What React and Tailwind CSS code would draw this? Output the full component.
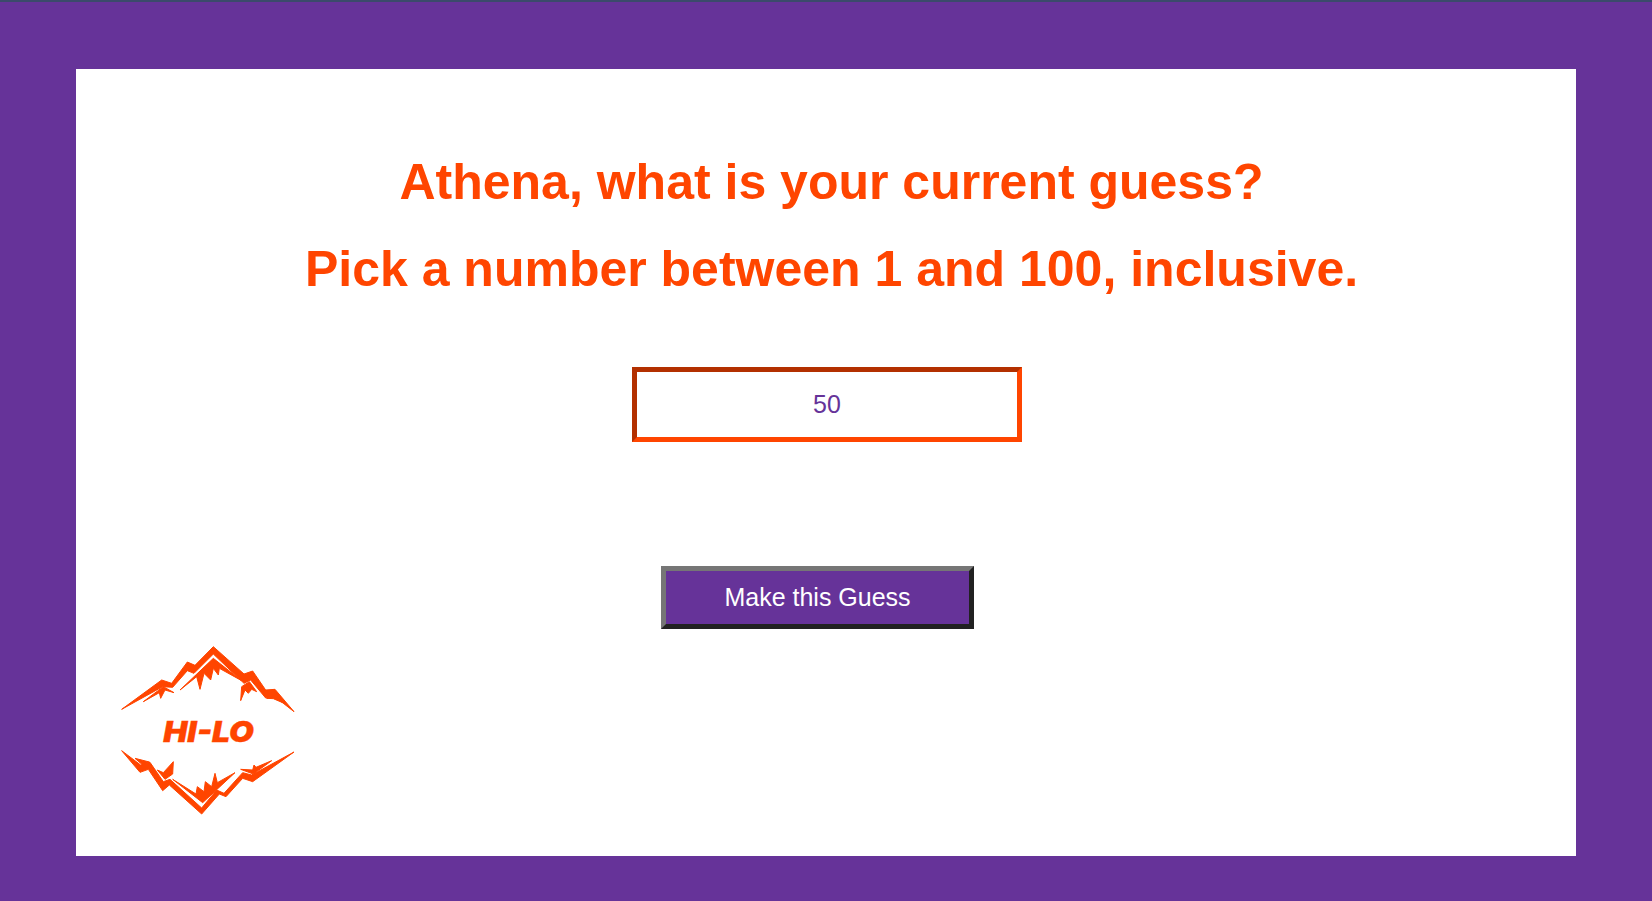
const orange = '#ff4500';

function Logo() {
  return (
    <svg width="210" height="190" viewBox="0 0 630 570" className="block">
      <g fill={orange} stroke={orange} strokeWidth="3">
        {/* top range */}
        <path d="M65 238L185 150L215 160L262 96L285 106L340 50L432 132L458 123L497 180L525 178L582 245L522 198L497 204L452 150L432 160L340 72L282 130L262 122L218 172L188 170Z" />
        <path d="M240 180L340 85L425 152L358 115L355 135L340 115L332 150L312 130L300 178L290 140Z" />
        <path d="M130 215L190 170L222 188L195 180L182 205L178 188Z" />
        <path d="M422 212L425 170L448 155L470 185L455 178L445 190L435 180Z" />
        <path d="M500 205L525 195L548 218L520 206Z" />
        {/* bottom range */}
        <path d="M65 362L122 405L150 397L190 455L210 448L305 534L350 480L372 490L428 428L455 435L582 366L458 455L428 445L378 500L358 492L305 552L208 465L188 482L145 418L120 427Z" />
        <path d="M218 448L288 492L292 470L312 485L316 455L335 470L345 430L352 458L405 428L308 518Z" />
        <path d="M105 385L148 396L128 405Z" />
        <path d="M172 420L190 428L220 395L218 432L195 448Z" />
        <path d="M422 418L458 420L462 405L468 412L515 392L460 432Z" />
      </g>
      <text x="190" y="335" textLength="272" lengthAdjust="spacingAndGlyphs" fill={orange} stroke={orange} strokeWidth="1" className="font-['Inter',sans-serif] text-[86px] font-black italic">
        HI-LO
      </text>
    </svg>
  );
}

export default function App() {
  return (
    <div className="h-[901px] overflow-hidden bg-[#663399] border-t-2 border-[#3b4a6b] px-[76px] pt-[67px] font-['Liberation_Sans',sans-serif]">
      <div className="h-[787px] bg-white">
        <div className="flex flex-col items-center pt-[70px] pl-[11px]">
          <h1 className="text-[50px] leading-[87px] font-bold text-[#ff4500]">Athena, what is your current guess?</h1>
          <h1 className="text-[50px] leading-[87px] font-bold text-[#ff4500]">Pick a number between 1 and 100, inclusive.</h1>
        </div>
        <div className="flex justify-center mt-[54px] pl-[2px]">
          <input
            type="text"
            defaultValue="50"
            className="w-[390px] h-[75px] border-[5px] border-solid border-t-[#b33000] border-l-[#b33000] border-r-[#ff4500] border-b-[#ff4500] text-center text-[25px] text-[#663399] outline-none"
          />
        </div>
        <div className="flex justify-center mt-[124px] pr-[17px]">
          <button className="w-[313px] h-[63px] border-[5px] border-solid border-t-[#767676] border-l-[#767676] border-r-[#212121] border-b-[#212121] bg-[#663399] text-[25px] text-white">
            Make this Guess
          </button>
        </div>
        <div className="mt-[1px] ml-[24px]">
          <Logo />
        </div>
      </div>
    </div>
  );
}
